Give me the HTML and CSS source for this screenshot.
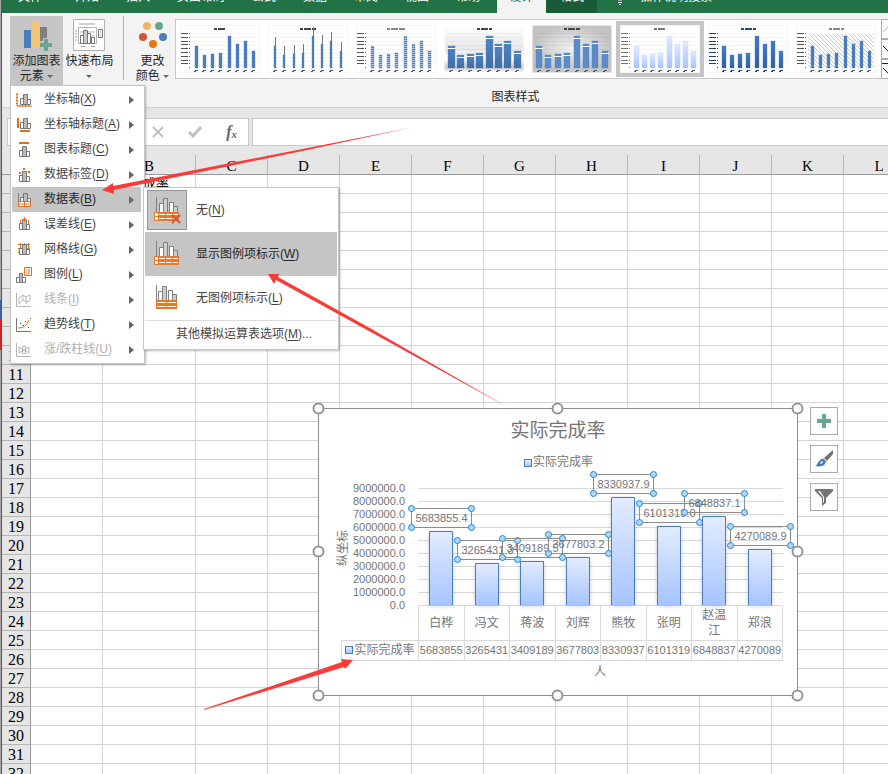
FILE: index.html
```html
<!DOCTYPE html>
<html lang="zh-CN">
<head>
<meta charset="utf-8">
<title>图表样式</title>
<link rel="stylesheet" href="styles.css">
</head>
<body>
<div class="window">
  <nav class="tabs">
    <a href="#" class="tab">文件</a>
    <a href="#" class="tab">开始</a>
    <a href="#" class="tab">插入</a>
    <a href="#" class="tab">页面布局</a>
    <a href="#" class="tab">公式</a>
    <a href="#" class="tab">数据</a>
    <a href="#" class="tab">审阅</a>
    <a href="#" class="tab">视图</a>
    <a href="#" class="tab">帮助</a>
    <a href="#" class="tab tab-active">设计</a>
    <a href="#" class="tab tab-context">格式</a>
    <a href="#" class="tab tab-search"><svg width="8" height="16" viewBox="0 0 8 16" fill="none" stroke="#fff"><path d="M2 11C2 8 .5 8 .5 5a3.500 3.500 0 0 1 7 0c0 3-1.500 3-1.500 6zM2 13.500h4M3 15.500h2"/></svg>操作说明搜索</a>
  </nav>

  <div class="ribbon">
    <div class="add-element">
      <button class="big-button pressed" type="button">
        <svg width="33" height="32" viewBox="0 0 33 32"><path fill="#4a7ebb" d="M4 11h7v18H4z"/><path fill="#f0c674" d="M12 3h7v26h-7z"/><path fill="#808080" d="M20 8h7v14h-7z"/><path fill="#c5c5c5" d="M19 22h4v-3h6v3h4v10H19z"/><path fill="#69a58f" d="M24 20h4v4h4v4h-4v4h-4v-4h-4v-4h4z"/></svg>
        <span>添加图表<br>元素 <i class="caret"></i></span>
      </button>
      <ul class="menu">
        <li><button type="button"><svg viewBox="0 0 16 16"><use href="#bars"/><path d="M1 1v13h15M0 2.500h2M0 5.500h2M0 8.500h2M0 11.500h2M3.500 13v2M6.500 13v2M9.500 13v2M12.500 13v2" class="orange-line"/></svg>坐标轴(<u>X</u>)</button></li>
        <li><button type="button"><svg viewBox="0 0 16 16"><use href="#bars" y="-1"/><path d="M1 1h2v10H1zM4 13h10v2H4z" class="orange"/></svg>坐标轴标题(<u>A</u>)</button></li>
        <li><button type="button"><svg viewBox="0 0 16 16"><use href="#bars" y="2" x="-1"/><path d="M3 0h10v2H3z" class="orange"/></svg>图表标题(<u>C</u>)</button></li>
        <li><button type="button"><svg viewBox="0 0 16 16"><use href="#bars" y="2" x="-1"/><path d="M3 5h2v2H3zM7 1h2v2H7zM12 4h2v2h-2z" class="orange"/></svg>数据标签(<u>D</u>)</button></li>
        <li class="open"><button type="button"><svg viewBox="0 0 16 16"><use href="#bars" y="-1"/><path d="M2.500 1v10" stroke="#808080"/><path d="M2.500 9.500h12v5h-12z" fill="#fff"/><path d="M2.500 9.500h12v5h-12zM2.500 12h12M8.500 9.500v5" class="orange-line"/></svg>数据表(<u>B</u>)</button>
          <div class="submenu">
            <button type="button"><span class="frame"><svg width="32" height="32" viewBox="0 0 32 32"><use href="#databars"/><path d="m21 21 8 8m0-8-8 8" stroke="#d35a3d" stroke-width="2"/></svg></span>无(<u>N</u>)</button>
            <button type="button" class="current"><span class="frame"><svg width="32" height="32" viewBox="0 0 32 32"><use href="#databars"/></svg></span>显示图例项标示(<u>W</u>)</button>
            <button type="button"><span class="frame"><svg width="32" height="32" viewBox="0 0 32 32"><use href="#plainbars"/></svg></span>无图例项标示(<u>L</u>)</button>
            <button type="button" class="more">其他模拟运算表选项(<u>M</u>)...</button>
          </div>
        </li>
        <li><button type="button"><svg viewBox="0 0 16 16"><use href="#bars" x="-1"/><path d="M4.500 3v4M8.500 0v5M12.500 3v4" class="orange-line"/></svg>误差线(<u>E</u>)</button></li>
        <li><button type="button"><svg viewBox="0 0 16 16"><path d="M2 2.500h12M2 6.500h12M2 10.500h12M4.500 1v12M8.500 1v12M12.500 1v12" class="orange-line"/><use href="#bars" x="-1"/></svg>网格线(<u>G</u>)</button></li>
        <li><button type="button"><svg viewBox="0 0 16 16"><path d="M.5 10.500h3v5h-3zM6.500 10.500h3v5h-3z" fill="#fff" stroke="#767676"/><path d="M3.500 6.500h3v9h-3z" fill="#bbb" stroke="#767676"/><path d="M8.500.5h7v8h-7zM10 3h1M12 3h2M10 5h1M12 5h2M10 7h1M12 7h2" class="orange-line"/></svg>图例(<u>L</u>)</button></li>
        <li><button type="button" disabled><svg viewBox="0 0 16 16" fill="none" stroke="#b5b5b5"><path d="M.5 1v13.500H15M3 12V6l4-3 3 2 4-2v6l-4 1-3-2zM7 3v5M10 5v7"/></svg>线条(<u>I</u>)</button></li>
        <li><button type="button"><svg viewBox="0 0 16 16" fill="none"><path d="M.5 1v13.500H15" stroke="#767676"/><path d="M2 11c6 0 8-2 11-8" class="orange-line"/><path d="M4 6h1v1H4zM7 8h1v1H7zM9 4h1v1H9zM14 1h1v1h-1zM12 10h1v1h-1z" fill="#444"/></svg>趋势线(<u>T</u>)</button></li>
        <li><button type="button" disabled><svg viewBox="0 0 16 16" fill="none" stroke="#b5b5b5"><path d="M.5 1v13.500H15M3 5l5 3 5-3v6L8 8l-5 3zM6.500 4.500h3v7h-3z"/></svg>涨/跌柱线(<u>U</u>)</button></li>
      </ul>
    </div>
    <button class="big-button layout-button" type="button">
      <svg width="33" height="32" viewBox="0 0 33 32" fill="none"><path d="M.5.5h31v31H.5z" fill="#fff" stroke="#b0b0b0"/><path d="M6 5h16M8 27.500h4M18 27.500h4M2 12h2M2 15h2M2 18h2M2 21h2" stroke="#a0a0a0"/><path d="M5.500 8.500h18v16h-18zM7 13h15M7 17h15M7 21h15" stroke="#b5b5b5"/><path d="M7.500 16.500h3v8h-3zM14.500 14.500h3v10h-3zM18.500 18.500h3v6h-3z" fill="#fff" stroke="#767676"/><path d="M10.500 11.500h4v13h-4z" fill="#ccc" stroke="#767676"/><path d="M25.500 10.500h4v8h-4zM27 13h1M27 16h1" fill="#fff" stroke="#767676"/></svg>
      <span>快速布局<br><i class="caret"></i></span>
    </button>
    <div class="style-group">
      <div class="style-row">
        <button class="big-button color-button" type="button">
          <svg width="32" height="32" viewBox="0 0 32 32"><circle cx="10" cy="7" r="4" fill="#ecb866"/><circle cx="22" cy="7" r="4" fill="#67a58c"/><circle cx="6" cy="18" r="4" fill="#d35732"/><circle cx="26" cy="18" r="4" fill="#4a7db5"/><circle cx="16" cy="25" r="4" fill="#e67817"/></svg>
          <span>更改<br>颜色 <i class="caret"></i></span>
        </button>
        <div class="gallery" id="gallery"></div>
        <div class="gallery-scroll">
          <button type="button" aria-label="向上"><svg width="12" height="8" viewBox="0 0 12 8" fill="none" stroke="#b5b5b5"><path d="m1 7 5-5 5 5"/></svg></button>
          <button type="button" aria-label="向下"><svg width="12" height="8" viewBox="0 0 12 8" fill="none" stroke="#222"><path d="m1 1 5 5 5-5"/></svg></button>
          <button type="button" aria-label="更多"><svg width="12" height="12" viewBox="0 0 12 12" fill="none" stroke="#222"><path d="M0 .5h12M1 5l5 5 5-5"/></svg></button>
        </div>
      </div>
      <div class="group-label">图表样式</div>
    </div>
  </div>

  <div class="formula-bar">
    <input class="name-box" type="text" aria-label="名称框">
    <div class="formula-tools">
      <button type="button" aria-label="取消"><svg width="12" height="12" viewBox="0 0 12 12"><path d="m1 1 10 10M11 1 1 11" stroke="#c0c0c0" stroke-width="2"/></svg></button>
      <button type="button" aria-label="输入"><svg width="14" height="12" viewBox="0 0 14 12" fill="none"><path d="m1 6 4 4 8-9" stroke="#c0c0c0" stroke-width="3"/></svg></button>
      <button type="button" class="fx">f<sub>x</sub></button>
    </div>
    <input class="formula-input" type="text" aria-label="编辑栏">
  </div>

  <main class="sheet">
    <table class="grid" id="grid"></table>

    <figure class="chart">
      <h2>实际完成率</h2>
      <div class="legend"><i class="key"></i>实际完成率</div>
      <svg class="plot" id="plot" width="478" height="136" viewBox="0 0 478 136"></svg>
      <table class="chart-data" id="chart-data"></table>
      <div class="axis-title">人</div>
      <svg class="handles" width="492" height="300" viewBox="-6 -6 492 300"><g fill="#fff" stroke="#959595" stroke-width="2"><circle cx=".5" cy=".5" r="5"/><circle cx="239.500" cy=".5" r="5"/><circle cx="479.500" cy=".5" r="5"/><circle cx=".5" cy="143.500" r="5"/><circle cx="479.500" cy="143.500" r="5"/><circle cx=".5" cy="287.500" r="5"/><circle cx="239.500" cy="287.500" r="5"/><circle cx="479.500" cy="287.500" r="5"/></g></svg>
    </figure>

    <div class="chart-tools">
      <button type="button" aria-label="图表元素"><svg width="20" height="20" viewBox="0 0 20 20"><path d="M8 3h4v5h5v4h-5v5H8v-5H3V8h5z" fill="#69a58f"/></svg></button>
      <button type="button" aria-label="图表样式"><svg width="20" height="20" viewBox="0 0 20 20"><path d="M19 1v4l-6 7-3-3z" fill="#707070"/><path d="M9 9l4 4-1 1-4-4z" fill="#999"/><path d="M8 10c2 0 4 2 3 5-1 2-5 3-10 2 3-1 3-6 7-7z" fill="#4a7db5"/><path d="M8 12l1 1-2 2-1-1z" fill="#fff"/></svg></button>
      <button type="button" aria-label="图表筛选器"><svg width="20" height="20" viewBox="0 0 20 20"><path d="M1 2h18v2l-7 7v5l-4 3v-8L1 4z" fill="#757575"/><path d="M4 4l5 6v6l1-1v-5L6 4z" fill="#fff"/></svg></button>
    </div>
  </main>
</div>

<svg class="arrows" width="888" height="774" viewBox="0 0 888 774" fill="#fb3b37">
  <path d="M102 190l11-7v3L300 149.500 412 127.500 300 151.500 114 190v4z"/>
  <path d="M268 274h11l-1 3 90 50 141 81-142-78-91-50-2 4z"/>
  <path d="M353 660l-12-1 1 3-138 47v1l140-43 1 2z"/>
</svg>

<svg width="0" height="0" class="defs">
  <defs>
    <g id="bars"><path d="M4.500 6.500h3v6h-3zM11.500 7.500h3v5h-3z" fill="#fff" stroke="#767676"/><path d="M7.500 2.500h4v10h-4z" fill="#bbb" stroke="#767676"/></g>
    <g id="databars" fill="none"><path d="M5.500 3v16" stroke="#808080"/><path d="M8.500 9.500h4v10h-4zM18.500 8.500h4v11h-4z" fill="#fff" stroke="#808080"/><path d="M12.500 4.500h4v15h-4zM22.500 12.500h4v7h-4z" fill="#ccc" stroke="#808080"/><path d="M3 18h25v9H3z" fill="#e8792a"/><path d="M4 19h3v3H4zM4 23h3v3H4zM8 20h6v1H8zM8 24h6v1H8zM15 20h6v1h-6zM15 24h6v1h-6zM22 20h5v1h-5zM22 24h5v1h-5z" fill="#fff"/></g>
    <g id="plainbars" fill="none"><path d="M5.500 3v16" stroke="#808080"/><path d="M7.500 9.500h4v10h-4zM17.500 8.500h4v11h-4z" fill="#fff" stroke="#808080"/><path d="M11.500 4.500h4v15h-4zM21.500 12.500h4v7h-4z" fill="#ccc" stroke="#808080"/><path d="M5 18h21v9H5z" fill="#e8792a"/><path d="M6 20h9v1H6zM6 24h9v1H6zM16 20h9v1h-9zM16 24h9v1h-9z" fill="#fff"/></g>
    <linearGradient id="soft" x2="0" y2="1"><stop stop-color="#e3ecff"/><stop offset="1" stop-color="#a5c4ff"/></linearGradient>
    <linearGradient id="deep" x2="0" y2="1"><stop stop-color="#3f7ccb"/><stop offset="1" stop-color="#2d5f9e"/></linearGradient>
    <linearGradient id="mid" x2="0" y2="1"><stop stop-color="#4f86c6"/><stop offset="1" stop-color="#406ea8"/></linearGradient>
    <linearGradient id="haze" x2="0" y2="1"><stop stop-color="#fff"/><stop offset=".5" stop-color="#e8e8e8"/><stop offset=".7" stop-color="#fff"/><stop offset=".9" stop-color="#ccc"/><stop offset="1" stop-color="#fff"/></linearGradient>
    <radialGradient id="grey"><stop stop-color="#f2f2f2"/><stop offset="1" stop-color="#c4c4c4"/></radialGradient>
    <pattern id="stripes" width="4" height="2" patternUnits="userSpaceOnUse"><path d="M0 0h4v1H0z" fill="#4a7ebb"/><path d="M0 1h4v1H0z" fill="#b5cbe5"/></pattern>
    <pattern id="hatch" width="4" height="4" patternUnits="userSpaceOnUse"><path d="M0 0l4 4" stroke="#c9c9c9"/></pattern>
  </defs>
</svg>
<script src="app.js"></script>
</body>
</html>
```
FILE: styles.css
```css
* { box-sizing: border-box; }

body {
  margin: 0;
  height: 100vh;
  overflow: hidden;
  position: relative;
  background: linear-gradient(#a9a9a9 300px, #3d62a8 300px, #3d62a8 320px, #c22 320px, #c22 350px, #a9a9a9 350px);
  font: 12px/15px "Liberation Sans", "Noto Sans CJK SC", sans-serif;
  color: #262626;
}

button, input { font: inherit; color: inherit; }
button { border: 0; padding: 0; background: none; }
svg { display: block; }
u { text-underline-offset: 2px; }

.window {
  margin-left: 1px;
  border-left: 1px solid #217346;
  min-height: 100vh;
  background: #e6e6e6;
}

/* ribbon tabs */
.tabs {
  display: flex;
  align-items: flex-end;
  height: 13px;
  overflow: hidden;
  background: #217346;
}
.tab {
  flex: none;
  height: 24px;
  padding: 0 13px 0 14px;
  line-height: 16px;
  color: #fff;
  text-decoration: none;
}
.tab:first-child { padding-left: 16px; padding-right: 19px; }
.tab-active { background: #f3f3f3; color: #217346; padding: 0 13px 0 12px; margin-left: 4px; }
.tab-context { background: #185c37; }
.tab-search { display: flex; gap: 16px; padding-left: 19px; }

/* ribbon */
.ribbon {
  display: flex;
  height: 95px;
  padding: 3px 0 0 8px;
  background: #f3f3f3;
  border-bottom: 1px solid #d0d0d0;
}
.add-element { position: relative; }
.big-button {
  display: flex;
  flex-direction: column;
  align-items: center;
  gap: 3px;
  width: 53px;
  height: 69px;
  padding-top: 3px;
  white-space: nowrap;
}
.layout-button { margin-right: 7px; }
.pressed { background: #c5c5c5; }
.caret {
  display: inline-block;
  vertical-align: middle;
  border: 3px solid transparent;
  border-top-color: #666;
  border-bottom: 0;
}
.style-group { flex: 1; min-width: 0; }
.style-row {
  display: flex;
  border-left: 1px solid #b5b5b5;
  height: 64px;
}
.color-button { width: 51px; padding-left: 6px; flex: none; }
.gallery {
  flex: 1;
  display: flex;
  height: 60px;
  margin-top: 3px;
  padding: 1px 0;
  overflow: hidden;
  background: #fff;
  border: 1px solid #cacaca;
  border-right: 0;
}
.thumb { flex: none; width: 88px; height: 56px; border: 4px solid transparent; }
.thumb.selected { border-color: #c5c5c5; }
.gallery-scroll {
  display: flex;
  flex-direction: column;
  flex: 0 0 7px;
  height: 60px;
  margin-top: 3px;
  overflow: hidden;
}
.gallery-scroll button {
  flex: 1;
  display: flex;
  align-items: center;
  border: 1px solid #ababab;
  border-right: 0;
  background: #fdfdfd;
}
.gallery-scroll svg { flex: none; }
.group-label { padding: 10px 0 0 20px; text-align: center; }

/* drop-down menu */
.menu {
  position: absolute;
  z-index: 5;
  top: 69px;
  left: 0;
  width: 135px;
  margin: 0;
  padding: 1px 3px 1px 1px;
  list-style: none;
  background: #fff;
  border: 1px solid #c6c6c6;
  box-shadow: 1px 1px 2px #0004;
  color: #444;
}
.menu li { position: relative; }
.menu li > button {
  display: flex;
  align-items: center;
  width: 100%;
  height: 25px;
  padding-left: 4px;
  text-align: left;
}
.menu li > button svg { width: 16px; height: 16px; margin-right: 12px; }
.menu li > button::after {
  content: "";
  margin-left: auto;
  margin-right: 7px;
  border: 4px solid transparent;
  border-left: 5px solid #666;
  border-right: 0;
}
.menu li > button:disabled { color: #b0b0b0; }
.menu .open > button { background: #c5c5c5; color: #262626; }
.orange { fill: #e2711d; }
.orange-line { stroke: #e2711d; fill: none; }

.submenu {
  position: absolute;
  z-index: 6;
  left: 131px;
  top: 0;
  width: 196px;
  padding: 0 1px 1px;
  background: #fff;
  border: 1px solid #c6c6c6;
  box-shadow: 1px 1px 2px #0004;
}
.submenu button {
  display: flex;
  align-items: center;
  width: 100%;
  height: 44px;
  padding-left: 2px;
  text-align: left;
}
.frame { padding: 3px; margin-right: 9px; border: 1px solid transparent; }
.submenu button:first-child .frame { background: #c5c5c5; border-color: #959595; }
.submenu .current { background: #c5c5c5; color: #262626; }
.submenu .more { height: 28px; padding-left: 31px; border-top: 1px solid #dcdcdc; }

/* formula bar */
.formula-bar { display: flex; padding: 10px 0 9px 5px; height: 47px; }
.name-box, .formula-tools, .formula-input {
  height: 28px;
  border: 1px solid #c9c9c9;
  background: #fff;
}
.name-box { width: 132px; }
.formula-tools {
  display: flex;
  align-items: center;
  justify-content: space-between;
  width: 110px;
  margin-right: 3px;
  padding: 0 11px 0 13px;
  border-left: 0;
}
.fx { font: italic bold 16px/16px "Liberation Serif", serif; color: #666; }
.fx sub { font-size: 11px; line-height: 0; vertical-align: -1px; }
.formula-input { flex: 1; min-width: 0; border-right: 0; }

/* worksheet */
.sheet { position: relative; overflow: hidden; }
.grid {
  width: calc(100% + 27px);
  table-layout: fixed;
  border-collapse: separate;
  border-spacing: 0;
  background: #fff;
}
.grid .row-head { width: 29px; }
.grid .wide { width: 93px; }
.grid .column { width: 72px; }
.grid th {
  height: 19px;
  padding: 2px 0 0;
  background: #e6e6e6;
  border-right: 1px solid #999;
  border-bottom: 1px solid #b5b5b5;
  font: 16px/16px "Liberation Serif", serif;
  color: #000;
}
.grid thead th {
  height: 20px;
  padding-top: 3px;
  border-bottom-color: #999;
  border-right-color: #b5b5b5;
  font-size: 15px;
}
.grid td {
  height: 19px;
  padding: 0 1px;
  border-right: 1px solid #d4d4d4;
  border-bottom: 1px solid #d4d4d4;
  font-size: 13px;
  line-height: 18px;
  white-space: nowrap;
  color: #000;
}

/* embedded chart */
.chart {
  position: absolute;
  left: 316px;
  top: 253px;
  width: 480px;
  height: 288px;
  margin: 0;
  padding-top: 12px;
  background: #fff;
  border: 1px solid #8c8c8c;
  color: #757575;
}
.chart h2 { margin: 0 0 15px; font-size: 19px; line-height: 20px; font-weight: 400; text-align: center; }
.legend { display: flex; align-items: center; justify-content: center; gap: 1px; padding-left: 1px; line-height: 13px; }
.key {
  display: inline-block;
  width: 8px;
  height: 8px;
  background: linear-gradient(#e3ecff, #a5c4ff);
  border: 1px solid #4a7ebb;
}
.plot { overflow: visible; }
.plot text { font-size: 11px; fill: #757575; }
.plot .tick { text-anchor: end; }
.plot .axis-name { font-size: 12px; text-anchor: middle; }
.bar { filter: drop-shadow(0 1px 2px #0003); }
.chart-data {
  width: 442px;
  margin-left: 22px;
  table-layout: fixed;
  border-collapse: collapse;
}
.chart-data .series { width: 77px; }
.chart-data th, .chart-data td {
  height: 20px;
  padding: 0;
  border: 1px solid #d9d9d9;
  font-weight: 400;
  text-align: center;
  white-space: nowrap;
}
.chart-data td { font-size: 11px; }
.chart-data thead th { height: 35px; padding: 0 8px; line-height: 16px; white-space: normal; }
.chart-data thead td { border-top: 0; border-left: 0; }
.chart-data .key { margin-right: 1px; }
.axis-title { padding: 4px 0 0 84px; text-align: center; }
.handles { position: absolute; left: -7px; top: -7px; }

.chart-tools {
  position: absolute;
  left: 808px;
  top: 252px;
  display: flex;
  flex-direction: column;
  gap: 10px;
}
.chart-tools button {
  display: grid;
  place-items: center;
  width: 28px;
  height: 28px;
  background: #fff;
  border: 1px solid #ababab;
}

.arrows { position: absolute; z-index: 10; left: 0; top: 0; pointer-events: none; }
.defs { position: absolute; }
```
FILE: app.js
```js
const people = [
  { name: "白桦", value: 5683855.4 },
  { name: "冯文", value: 3265431.3 },
  { name: "蒋波", value: 3409189.5 },
  { name: "刘辉", value: 3677803.2 },
  { name: "熊牧", value: 8330937.9 },
  { name: "张明", value: 6101319.0 },
  { name: "赵温江", value: 6848837.1 },
  { name: "郑浪", value: 4270089.9 },
];

// Worksheet grid
const letters = [..."ABCDEFGHIJKL"];
let grid = '<colgroup><col class="row-head">';
letters.forEach((l) => {
  grid += `<col${l === "L" ? "" : ` class="${l === "B" ? "wide" : "column"}"`}>`;
});
grid += "</colgroup><thead><tr><th></th>" + letters.map((l) => `<th>${l}</th>`).join("") + "</tr></thead><tbody>";
for (let row = 1; row <= 32; row++) {
  grid += `<tr><th>${row}</th>` + letters.map((l) => `<td>${row === 1 && l === "B" ? "实际完成率" : ""}</td>`).join("") + "</tr>";
}
document.getElementById("grid").innerHTML = grid + "</tbody>";

// Chart plot: 13px per million, categories about 45.5px wide
const left = 99, base = 136, step = 45.5;
let plot = "";
for (let m = 0; m <= 9; m++) {
  const y = base - m * 13;
  plot += `<path d="M${left} ${y + 0.5}h365" stroke="#d9d9d9"/>`;
  plot += `<text class="tick" x="86" y="${y + 4}">${(m * 1e6).toFixed(1)}</text>`;
}
plot += '<text class="axis-name" transform="translate(28 79) rotate(-90)">纵坐标</text>';
const tops = people.map((p) => Math.round(base - (p.value * 13) / 1e6));
people.forEach((p, i) => {
  const x = Math.round(left + i * step + 11) + 0.5;
  const y = tops[i] + 0.5;
  plot += `<g class="bar"><rect x="${x}" y="${y}" width="23" height="${base - y}" fill="url(#soft)"/><path d="M${x} ${base}V${y}h23V${base}" fill="none" stroke="#4a7ebb"/></g>`;
});
people.forEach((p, i) => {
  const x = Math.round(left + i * step - 7) + 0.5;
  const y = tops[i] - 22.5;
  plot += `<rect x="${x}" y="${y}" width="60" height="19" fill="none" stroke="#8c8c8c"/>`;
  plot += `<text x="${x + 4}" y="${y + 13}">${p.value.toFixed(1)}</text>`;
  [[0, 0], [60, 0], [0, 19], [60, 19]].forEach(([dx, dy]) => {
    plot += `<circle cx="${x + dx}" cy="${y + dy}" r="3" fill="#b3d6f2" stroke="#1f87dc"/>`;
  });
});
document.getElementById("plot").innerHTML = plot;

document.getElementById("chart-data").innerHTML =
  '<colgroup><col class="series"></colgroup><thead><tr><td></td>' +
  people.map((p) => `<th>${p.name}</th>`).join("") +
  '</tr></thead><tbody><tr><th><i class="key"></i>实际完成率</th>' +
  people.map((p) => `<td>${Math.floor(p.value)}</td>`).join("") +
  "</tr></tbody>";

// Style gallery
const styles = [
  { fill: "#4a7ebb", w: 3, axis: "#555", title: 12 },
  { fill: "#4a7ebb", w: 2, title: 16, start: 7, gap: 9.4, lines: true },
  { fill: "url(#stripes)", w: 3, axis: "#555", title: 18, ink: "#888" },
  { fill: "url(#mid)", w: 7, title: 15, start: 7, gap: 9.4, bg: "url(#haze)", caps: true },
  { fill: "#5b8cc8", w: 6, title: 16, start: 7, gap: 9.4, bg: "url(#grey)", caps: true },
  { fill: "url(#soft)", w: 5, axis: "#777", title: 12, ink: "#777", edge: "#b9cdf3" },
  { fill: "url(#deep)", w: 4, axis: "#1f3f70", title: 15, ink: "#1f4e8c" },
  { fill: "#4a7ebb", w: 3, axis: "#555", title: 15, ink: "#888", hatch: true },
];
const heights = [22, 13, 14, 15, 32, 24, 27, 17];
document.getElementById("gallery").innerHTML = styles.map((s, n) => {
  const ink = s.ink || "#444";
  let g = `<rect x=".5" y=".5" width="79" height="47" fill="${s.bg || "#fff"}" stroke="${s.bg ? "none" : "#f5f5f5"}"/>`;
  if (s.hatch) g += '<rect x="12" y="9" width="66" height="34" fill="url(#hatch)"/>';
  else for (let y = 8; y < 43; y += 4) g += `<path d="M${s.axis ? 12 : 3} ${y + 0.5}h${s.axis ? 66 : 74}" stroke="#0000000a"/>`;
  if (s.axis) {
    [8, 12, 16, 19, 23, 27, 31, 35, 38].forEach((y) => {
      g += `<path d="M1 ${y + 0.5}h7M9 ${y + 0.5}h1" stroke="${s.axis}"/>`;
    });
    g += `<path d="M9 42.500h1" stroke="${s.axis}"/>`;
  }
  g += `<path d="M${40 - Math.floor(s.title / 2)} 4h${s.title}" stroke="${ink}" stroke-width="2" stroke-dasharray="3 1 4 0"/>`;
  heights.forEach((h, i) => {
    const c = Math.round((s.start || 16) + i * (s.gap || 8.15));
    const x = c - Math.floor(s.w / 2);
    if (s.lines) g += `<path d="M${c + 0.5} ${43 - h - 9}v9" stroke="#777"/>`;
    g += `<rect x="${x}" y="${43 - h}" width="${s.w}" height="${h}" fill="${s.fill}" stroke="${s.edge || "#4a7ebb"}" stroke-opacity=".35"/>`;
    if (s.caps) g += `<path d="M${x - 1} ${45.5 - h}h${s.w + 2}" stroke="#fff"/>`;
    g += `<path d="M${c - 2} 46.500h2M${c - 1} 45.500h3" stroke="${n === 6 ? "#1f3f70" : "#555"}"/>`;
  });
  return `<button type="button" class="thumb${n === 5 ? " selected" : ""}" aria-label="样式 ${n + 1}"><svg width="80" height="48" viewBox="0 0 80 48">${g}</svg></button>`;
}).join("");
```
